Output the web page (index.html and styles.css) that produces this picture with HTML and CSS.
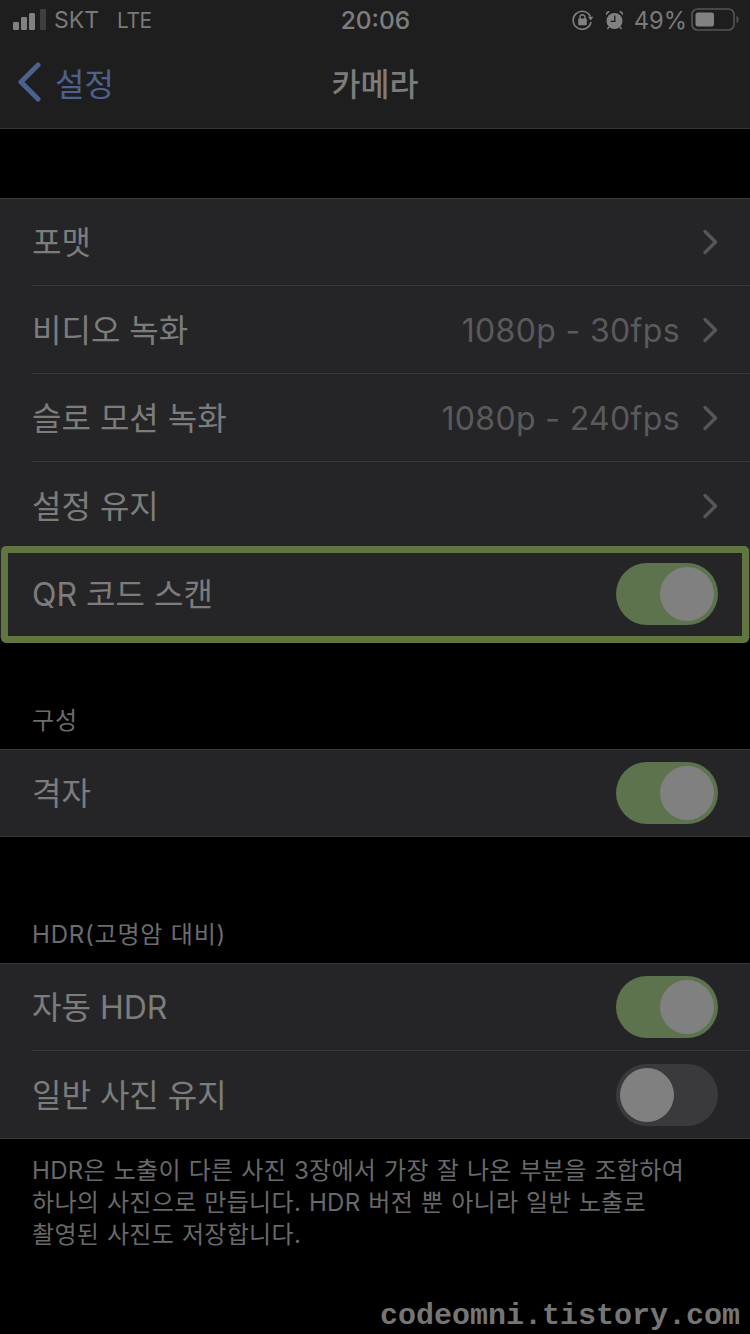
FILE: index.html
```html
<!DOCTYPE html>
<html lang="ko">
<head>
<meta charset="utf-8">
<title>카메라</title>
<link rel="stylesheet" href="styles.css">
</head>
<body>
<div class="page">
  <header class="top">
    <div class="status">
      <div class="status-side">
        <svg class="signal" width="34" height="22" viewBox="0 0 34 22"><rect x="0" y="13" width="6" height="8" rx="1.2" fill="#818181"/><rect x="8" y="8" width="6" height="13" rx="1.2" fill="#818181"/><rect x="16" y="4" width="6" height="17" rx="1.2" fill="#818181"/><rect x="27" y="0" width="6" height="21" rx="1.2" fill="#3f3f3f"/></svg>
        <span class="carrier">SKT</span>
        <span class="carrier net">LTE</span>
      </div>
      <div class="time">20:06</div>
      <div class="status-side right">
        <svg class="lock" width="22" height="20" viewBox="0 0 22 20"><path d="M18.4 6.6A9 9 0 1 0 19 12" fill="none" stroke="#818181" stroke-width="1.6"/><path d="M16 6.800h5.400L18.600 10.600z" fill="#818181"/><rect x="6.200" y="8.600" width="8.600" height="6.600" rx="1" fill="#818181"/><path d="M8 9V7.200a2.500 2.500 0 0 1 5 0V9" fill="none" stroke="#818181" stroke-width="1.400"/></svg>
        <svg class="alarm" width="19" height="20" viewBox="0 0 19 20"><circle cx="9.500" cy="11" r="8" fill="#818181"/><path d="M1 5.200 5 1.400a3 3 0 0 0-4 3.800zM18 5.200 14 1.400a3 3 0 0 1 4 3.800z" fill="#818181"/><path d="M9.800 5.600v5.800H5.600" fill="none" stroke="#1e1e1e" stroke-width="1.300"/><path d="M4 17l-1.600 2M15 17l1.600 2" stroke="#818181" stroke-width="1.500"/></svg>
        <span class="pct">49%</span>
        <svg class="battery" width="49" height="24" viewBox="0 0 49 24"><rect x="1" y="1" width="42" height="21" rx="5.500" fill="none" stroke="#555" stroke-width="1.600"/><rect x="4.500" y="4.500" width="18.500" height="14" rx="2.500" fill="#818181"/><path d="M46 8.500c1.400.6 1.400 5.400 0 6z" fill="#555" stroke="#555"/></svg>
      </div>
    </div>
    <nav class="nav">
      <div class="nav-side">
        <svg class="back" width="26" height="40" viewBox="0 0 26 40"><path d="M22 3 5 20l17 17" fill="none" stroke="#4d618f" stroke-width="5" stroke-linecap="round" stroke-linejoin="round"/></svg>
        <span class="back-label">설정</span>
      </div>
      <h1 class="title">카메라</h1>
      <div class="nav-side"></div>
    </nav>
  </header>

  <div class="spacer"></div>

  <section class="group">
    <div class="row"><span class="label">포맷</span><span class="detail"><svg class="chev" width="16" height="26" viewBox="0 0 16 26"><path d="M3 2.500 13.500 13 3 23.500" fill="none" stroke="#565658" stroke-width="3.400" stroke-linecap="round" stroke-linejoin="round"/></svg></span></div>
    <div class="row"><span class="label">비디오 녹화</span><span class="detail"><span class="value">1080p - 30fps</span><svg class="chev" width="16" height="26" viewBox="0 0 16 26"><path d="M3 2.500 13.500 13 3 23.500" fill="none" stroke="#565658" stroke-width="3.400" stroke-linecap="round" stroke-linejoin="round"/></svg></span></div>
    <div class="row"><span class="label">슬로 모션 녹화</span><span class="detail"><span class="value">1080p - 240fps</span><svg class="chev" width="16" height="26" viewBox="0 0 16 26"><path d="M3 2.500 13.500 13 3 23.500" fill="none" stroke="#565658" stroke-width="3.400" stroke-linecap="round" stroke-linejoin="round"/></svg></span></div>
    <div class="row"><span class="label">설정 유지</span><span class="detail"><svg class="chev" width="16" height="26" viewBox="0 0 16 26"><path d="M3 2.500 13.500 13 3 23.500" fill="none" stroke="#565658" stroke-width="3.400" stroke-linecap="round" stroke-linejoin="round"/></svg></span></div>
    <div class="row"><span class="label">QR 코드 스캔</span><span class="toggle on"><span class="knob"></span></span></div>
    <div class="highlight"></div>
  </section>

  <h2 class="section-head first">구성</h2>
  <section class="group">
    <div class="row"><span class="label">격자</span><span class="toggle on"><span class="knob"></span></span></div>
  </section>

  <h2 class="section-head">HDR(고명암 대비)</h2>
  <section class="group">
    <div class="row"><span class="label">자동 HDR</span><span class="toggle on"><span class="knob"></span></span></div>
    <div class="row"><span class="label">일반 사진 유지</span><span class="toggle"><span class="knob"></span></span></div>
  </section>
  <p class="note">HDR은 노출이 다른 사진 3장에서 가장 잘 나온 부분을 조합하여<br>하나의 사진으로 만듭니다. HDR 버전 뿐 아니라 일반 노출로<br>촬영된 사진도 저장합니다.</p>

  <div class="watermark">codeomni.tistory.com</div>
</div>
</body>
</html>
```
FILE: styles.css
```css
* { box-sizing: border-box; }
html, body { margin: 0; padding: 0; background: #000; }
.page {
  position: relative;
  width: 750px;
  height: 1334px;
  overflow: hidden;
  background: #000;
  color: #7c7c7c;
  font-family: Inter, "Noto Sans CJK KR", sans-serif;
}
.top { background: #1e1e1e; border-bottom: 1px solid #383838; height: 129px; }
.status { height: 40px; display: flex; align-items: center; justify-content: space-between; }
.status-side { flex: 1; display: flex; align-items: center; padding-left: 13px; font-size: 23px; color: #7a7a7a; }
.status-side.right { justify-content: flex-end; padding-left: 0; padding-right: 10px; }
.signal { margin-right: 7px; margin-top: -1px; }
.net { margin-left: 18px; font-size: 21px; letter-spacing: -0.5px; }
.time { font-size: 24.5px; font-weight: 500; color: #7e7e7e; margin-left: -2px; }
.lock { margin-right: 11px; }
.alarm { margin-right: 10px; }
.pct { font-size: 23.7px; margin-right: 4px; }
.nav { height: 88px; display: flex; align-items: center; padding-bottom: 5px; }
.nav-side { flex: 1; display: flex; align-items: center; padding-left: 16px; }
.back { margin-right: 13px; }
.back-label { font-size: 32px; color: #4d618f; }
.title { margin: 0; font-size: 31.500px; font-weight: 500; color: #7c7c7c; }
.spacer { height: 69px; }
.group {
  position: relative;
  background: #252527;
  border-top: 1px solid #3a3a3c;
  border-bottom: 1px solid #3a3a3c;
}
.row {
  height: 88px;
  margin-left: 32px;
  padding-right: 32px;
  display: flex;
  align-items: center;
  justify-content: space-between;
  border-top: 1px solid #3a3a3c;
  font-size: 32px;
}
.row:first-child { height: 86px; border-top: 0; }
.label { color: #7c7c7c; padding-bottom: 4px; }
.detail { display: flex; align-items: center; color: #5a5a5c; letter-spacing: 0.35px; }
.value { padding-top: 2px; }
.chev { margin-left: 22px; }
.toggle {
  position: relative;
  width: 102px;
  height: 62px;
  border-radius: 31px;
  background: #3a3a3c;
  flex: none;
}
.toggle.on { background: #5c734e; }
.knob {
  position: absolute;
  top: 4px;
  left: 4px;
  width: 54px;
  height: 54px;
  border-radius: 50%;
  background: #808080;
}
.toggle.on .knob { left: 44px; }
.highlight {
  position: absolute;
  left: 1px;
  right: 1px;
  top: 347px;
  height: 97px;
  border: 7px solid #61763f;
  border-radius: 5px;
}
.section-head {
  margin: 0;
  height: 126px;
  padding: 83px 32px 13px;
  font-size: 24px;
  line-height: 30px;
  font-weight: 400;
  letter-spacing: 0.8px;
  color: #6c6c6e;
}
.section-head.first { height: 111px; padding-top: 68px; }
.note {
  margin: 0;
  padding: 16px 32px 0;
  font-size: 24px;
  letter-spacing: 0.3px;
  word-spacing: 0.8px;
  line-height: 32px;
  color: #69696b;
}
.watermark {
  position: absolute;
  right: 10px;
  bottom: 0;
  font-family: "Liberation Mono", monospace;
  font-size: 30px;
  line-height: 36px;
  font-weight: 700;
  color: #757575;
}
```
